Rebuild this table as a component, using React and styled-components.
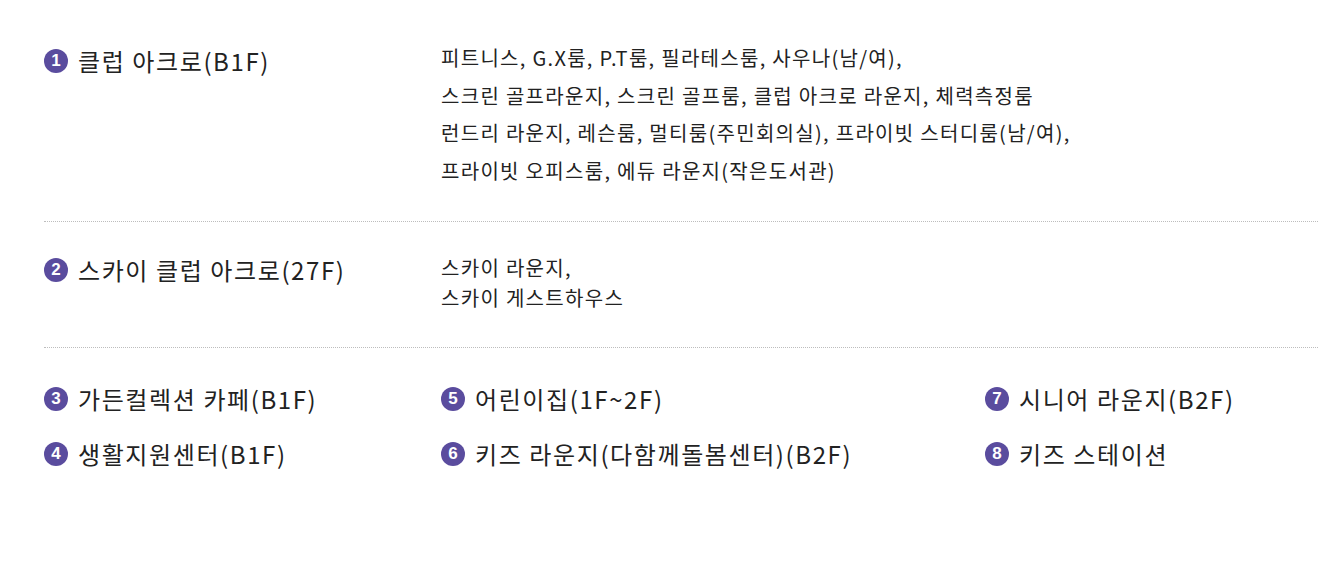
import styled, { createGlobalStyle } from 'styled-components';

const GlobalStyle = createGlobalStyle`
  body {
    margin: 0;
    background: #fff;
    font-family: "Noto Sans CJK KR", "Noto Sans", sans-serif;
    color: #222;
  }
`;

// Styled components
const Container = styled.div`
  padding-left: 44px;
`;

const Section = styled.div`
  display: grid;
  grid-template-columns: 397px 1fr;
  align-items: start;
  padding: ${(p) => p.$pad};
  border-bottom: 1px dotted #bdbdbd;
`;

const Title = styled.div`
  display: flex;
  align-items: center;
  gap: 10px;
  margin-top: ${(p) => p.$offset || 0}px;
  font-size: 24px;
  line-height: 32px;
  letter-spacing: 1.6px;
  color: #222;
  white-space: nowrap;
`;

const Badge = styled.span`
  display: inline-flex;
  align-items: center;
  justify-content: center;
  flex: none;
  width: 24px;
  height: 24px;
  border-radius: 50%;
  background: #5a4c9e;
  color: #fff;
  font-family: "Liberation Sans", Arial, sans-serif;
  font-weight: 700;
  font-size: 17px;
  letter-spacing: 0;
`;

const Detail = styled.p`
  margin: 0;
  font-size: 20px;
  line-height: ${(p) => p.$lh};
  letter-spacing: 1.3px;
  color: #222;
  white-space: nowrap;
`;

const FacilityGrid = styled.div`
  display: grid;
  grid-template-columns: 397px 544px 1fr;
  grid-auto-flow: column;
  grid-template-rows: repeat(2, 30px);
  row-gap: 25px;
  align-items: center;
  padding: 36px 0 0;
`;

const SectionItem = ({ num, title, lines, pad, lh, offset }) => (
  <Section $pad={pad}>
    <Title $offset={offset}>
      <Badge>{num}</Badge>
      {title}
    </Title>
    <Detail $lh={lh}>
      {lines.map((l, i) => (
        <span key={i}>
          {l}
          {i < lines.length - 1 && <br />}
        </span>
      ))}
    </Detail>
  </Section>
);

const facilities = [
  ['3', '가든컬렉션 카페(B1F)'],
  ['4', '생활지원센터(B1F)'],
  ['5', '어린이집(1F~2F)'],
  ['6', '키즈 라운지(다함께돌봄센터)(B2F)'],
  ['7', '시니어 라운지(B2F)'],
  ['8', '키즈 스테이션'],
];

const App = () => {
  return (
    <Container>
      <GlobalStyle />
      <SectionItem
        num="1"
        title="클럽 아크로(B1F)"
        pad="39px 0 32px"
        lh="37.5px"
        offset={6}
        lines={[
          '피트니스, G.X룸, P.T룸, 필라테스룸, 사우나(남/여),',
          '스크린 골프라운지, 스크린 골프룸, 클럽 아크로 라운지, 체력측정룸',
          '런드리 라운지, 레슨룸, 멀티룸(주민회의실), 프라이빗 스터디룸(남/여),',
          '프라이빗 오피스룸, 에듀 라운지(작은도서관)',
        ]}
      />
      <SectionItem
        num="2"
        title="스카이 클럽 아크로(27F)"
        pad="31px 0 34px"
        lh="30px"
        offset={1}
        lines={['스카이 라운지,', '스카이 게스트하우스']}
      />
      <FacilityGrid>
        {facilities.map(([n, t]) => (
          <Title key={n}>
            <Badge>{n}</Badge>
            {t}
          </Title>
        ))}
      </FacilityGrid>
    </Container>
  );
};

export default App;
